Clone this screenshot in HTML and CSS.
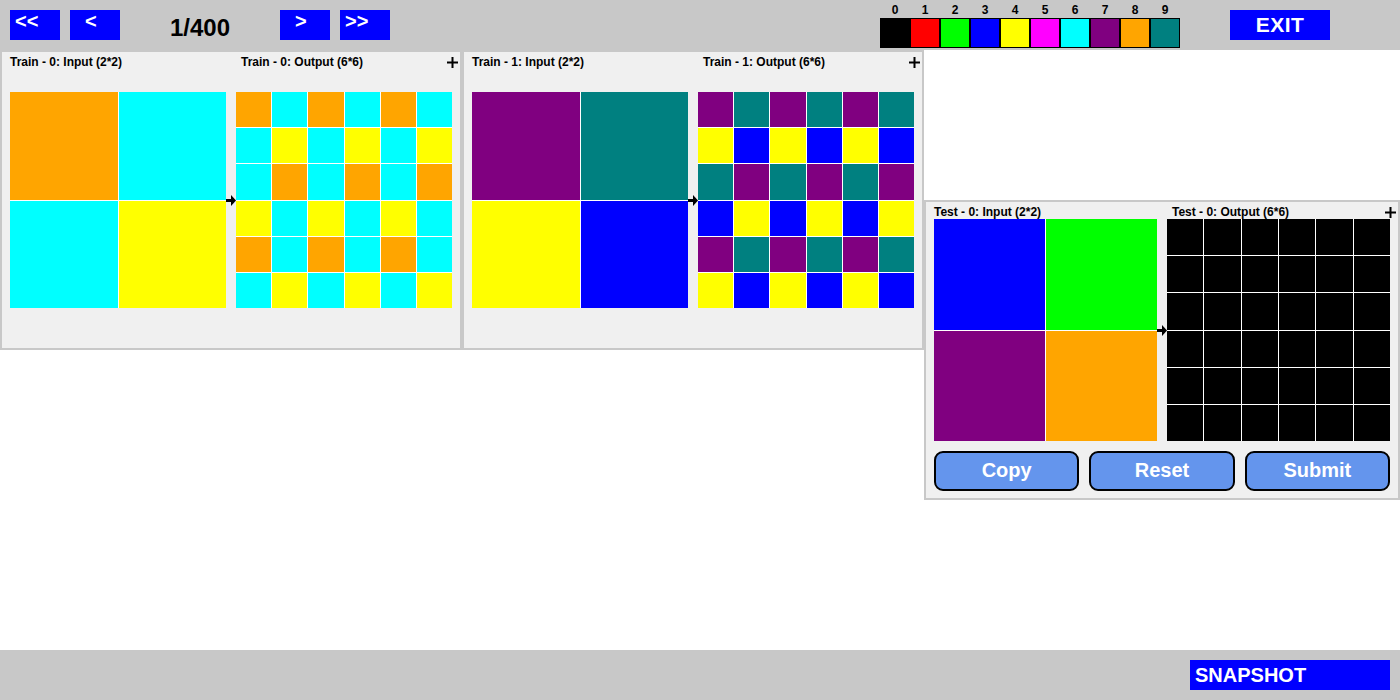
FILE: index.html
```html
<!DOCTYPE html>
<html>
<head>
<meta charset="utf-8">
<title>ARC Task</title>
<link rel="stylesheet" href="styles.css">
</head>
<body>
<div class="topbar">
  <div class="nav nav-dbl">&lt;&lt;</div>
  <div class="nav nav-sgl">&lt;</div>
  <div class="counter">1/400</div>
  <div class="nav nav-sgl">&gt;</div>
  <div class="nav nav-dbl">&gt;&gt;</div>
  <div class="palette">
    <div class="digits">
      <span>0</span><span>1</span><span>2</span><span>3</span><span>4</span><span>5</span><span>6</span><span>7</span><span>8</span><span>9</span>
    </div>
    <div class="chips">
      <span class="chip c0"></span><span class="chip c1"></span><span class="chip c2"></span><span class="chip c3"></span><span class="chip c4"></span><span class="chip c5"></span><span class="chip c6"></span><span class="chip c7"></span><span class="chip c8"></span><span class="chip c9"></span>
    </div>
  </div>
  <div class="exit">EXIT</div>
</div>

<div class="main">
  <div class="train-list">
    <section class="panel train">
      <div class="head">
        <div class="t-in">Train - 0: Input (2*2)</div>
        <div class="t-out">Train - 0: Output (6*6)</div>
        <svg class="plus" width="11" height="11" viewBox="0 0 11 11"><rect x="4.5" y="0" width="2" height="11"/><rect x="0" y="4.5" width="11" height="2"/></svg>
      </div>
      <div class="body">
        <div class="grid g2">
          <span class="c8"></span><span class="c6"></span>
          <span class="c6"></span><span class="c4"></span>
        </div>
        <div class="arrow-col"><svg width="10" height="11" viewBox="0 0 10 11"><rect x="0" y="4" width="6" height="3"/><polygon points="5,0 10,5.5 5,11"/></svg></div>
        <div class="grid g6">
          <span class="c8"></span><span class="c6"></span><span class="c8"></span><span class="c6"></span><span class="c8"></span><span class="c6"></span>
          <span class="c6"></span><span class="c4"></span><span class="c6"></span><span class="c4"></span><span class="c6"></span><span class="c4"></span>
          <span class="c6"></span><span class="c8"></span><span class="c6"></span><span class="c8"></span><span class="c6"></span><span class="c8"></span>
          <span class="c4"></span><span class="c6"></span><span class="c4"></span><span class="c6"></span><span class="c4"></span><span class="c6"></span>
          <span class="c8"></span><span class="c6"></span><span class="c8"></span><span class="c6"></span><span class="c8"></span><span class="c6"></span>
          <span class="c6"></span><span class="c4"></span><span class="c6"></span><span class="c4"></span><span class="c6"></span><span class="c4"></span>
        </div>
      </div>
    </section>

    <section class="panel train">
      <div class="head">
        <div class="t-in">Train - 1: Input (2*2)</div>
        <div class="t-out">Train - 1: Output (6*6)</div>
        <svg class="plus" width="11" height="11" viewBox="0 0 11 11"><rect x="4.5" y="0" width="2" height="11"/><rect x="0" y="4.5" width="11" height="2"/></svg>
      </div>
      <div class="body">
        <div class="grid g2">
          <span class="c7"></span><span class="c9"></span>
          <span class="c4"></span><span class="c3"></span>
        </div>
        <div class="arrow-col"><svg width="10" height="11" viewBox="0 0 10 11"><rect x="0" y="4" width="6" height="3"/><polygon points="5,0 10,5.5 5,11"/></svg></div>
        <div class="grid g6">
          <span class="c7"></span><span class="c9"></span><span class="c7"></span><span class="c9"></span><span class="c7"></span><span class="c9"></span>
          <span class="c4"></span><span class="c3"></span><span class="c4"></span><span class="c3"></span><span class="c4"></span><span class="c3"></span>
          <span class="c9"></span><span class="c7"></span><span class="c9"></span><span class="c7"></span><span class="c9"></span><span class="c7"></span>
          <span class="c3"></span><span class="c4"></span><span class="c3"></span><span class="c4"></span><span class="c3"></span><span class="c4"></span>
          <span class="c7"></span><span class="c9"></span><span class="c7"></span><span class="c9"></span><span class="c7"></span><span class="c9"></span>
          <span class="c4"></span><span class="c3"></span><span class="c4"></span><span class="c3"></span><span class="c4"></span><span class="c3"></span>
        </div>
      </div>
    </section>
  </div>

  <section class="panel test">
    <div class="head">
      <div class="t-in">Test - 0: Input (2*2)</div>
      <div class="t-out">Test - 0: Output (6*6)</div>
      <svg class="plus" width="11" height="11" viewBox="0 0 11 11"><rect x="4.5" y="0" width="2" height="11"/><rect x="0" y="4.5" width="11" height="2"/></svg>
    </div>
    <div class="body">
      <div class="grid g2">
        <span class="c3"></span><span class="c2"></span>
        <span class="c7"></span><span class="c8"></span>
      </div>
      <div class="arrow-col"><svg width="10" height="11" viewBox="0 0 10 11"><rect x="0" y="4" width="6" height="3"/><polygon points="5,0 10,5.5 5,11"/></svg></div>
      <div class="grid g6">
        <span class="c0"></span><span class="c0"></span><span class="c0"></span><span class="c0"></span><span class="c0"></span><span class="c0"></span>
        <span class="c0"></span><span class="c0"></span><span class="c0"></span><span class="c0"></span><span class="c0"></span><span class="c0"></span>
        <span class="c0"></span><span class="c0"></span><span class="c0"></span><span class="c0"></span><span class="c0"></span><span class="c0"></span>
        <span class="c0"></span><span class="c0"></span><span class="c0"></span><span class="c0"></span><span class="c0"></span><span class="c0"></span>
        <span class="c0"></span><span class="c0"></span><span class="c0"></span><span class="c0"></span><span class="c0"></span><span class="c0"></span>
        <span class="c0"></span><span class="c0"></span><span class="c0"></span><span class="c0"></span><span class="c0"></span><span class="c0"></span>
      </div>
    </div>
    <div class="actions">
      <div class="act">Copy</div>
      <div class="act">Reset</div>
      <div class="act">Submit</div>
    </div>
  </section>
</div>

<div class="bottombar">
  <div class="snapshot">SNAPSHOT</div>
</div>
</body>
</html>
```

FILE: styles.css
```css
* { box-sizing: border-box; }

html, body {
  margin: 0;
  padding: 0;
  background: #ffffff;
  font-family: "Liberation Sans", Arial, sans-serif;
  font-weight: bold;
  color: #000;
}

body {
  width: 1400px;
  height: 700px;
  display: flex;
  flex-direction: column;
  overflow: hidden;
}

/* ---------- top bar ---------- */
.topbar {
  height: 50px;
  flex: 0 0 50px;
  background: #c8c8c8;
  display: flex;
  align-items: flex-start;
  padding-left: 10px;
}

.nav {
  width: 50px;
  height: 30px;
  margin-top: 10px;
  background: #0000ff;
  color: #fff;
  font-size: 20px;
  line-height: 20px;
  padding-top: 1px;
}
.nav + .nav { margin-left: 10px; }
.nav-dbl { padding-left: 5px; }
.nav-sgl { padding-left: 15px; }

.counter {
  width: 160px;
  text-align: center;
  font-size: 24px;
  line-height: 24px;
  padding-top: 16px;
}

.palette {
  margin-left: 490px;
  width: 300px;
  display: flex;
  flex-direction: column;
}
.digits {
  display: flex;
  height: 18px;
  padding-top: 4px;
}
.digits span {
  width: 30px;
  text-align: center;
  font-size: 12px;
  line-height: 12px;
}
.chips { display: flex; }
.chip {
  width: 30px;
  height: 30px;
  border: 1px solid #000;
}

.exit {
  margin-left: 50px;
  margin-top: 10px;
  width: 100px;
  height: 30px;
  background: #0000ff;
  color: #fff;
  font-size: 21px;
  letter-spacing: 0.5px;
  line-height: 30px;
  text-align: center;
}

/* ---------- main ---------- */
.main {
  flex: 0 0 600px;
  height: 600px;
  display: flex;
  align-items: flex-start;
}

.train-list { display: flex; }

.panel {
  border: 2px solid #c8c8c8;
  background: #f0f0f0;
  padding: 0 8px;
  height: 300px;
}
.train { width: 462px; }
.test { width: 476px; align-self: center; }

.head {
  display: flex;
  align-items: center;
  height: 16px;
  padding-top: 4px;
  font-size: 12px;
  line-height: 12px;
}
.train .t-in { width: 231px; }
.test .t-in { width: 238px; }
.t-out { flex: 1; }
.plus {
  margin-right: -6px;
  margin-top: 1px;
  flex: 0 0 auto;
}

.body {
  display: flex;
  align-items: center;
}
.train .body { margin-top: 24px; }
.test .body { margin-top: 1px; }

.arrow-col {
  width: 10px;
  display: flex;
  align-items: center;
}
.arrow-col svg { display: block; }

.grid {
  display: grid;
  gap: 1px;
  background: #ffffff;
}
.train .grid { width: 216px; height: 216px; }
.test .grid { width: 223px; height: 222px; }
.g2 { grid-template-columns: repeat(2, 1fr); grid-template-rows: repeat(2, 1fr); }
.g6 { grid-template-columns: repeat(6, 1fr); grid-template-rows: repeat(6, 1fr); }
.grid span { display: block; }

.c0 { background: #000000; }
.c1 { background: #ff0000; }
.c2 { background: #00ff00; }
.c3 { background: #0000ff; }
.c4 { background: #ffff00; }
.c5 { background: #ff00ff; }
.c6 { background: #00ffff; }
.c7 { background: #800080; }
.c8 { background: #ffa500; }
.c9 { background: #008080; }

.actions {
  display: flex;
  gap: 10px;
  margin-top: 10px;
}
.act {
  flex: 1;
  height: 40px;
  border: 2px solid #000;
  border-radius: 9px;
  background: #6495ed;
  color: #fff;
  font-size: 20px;
  line-height: 34px;
  text-align: center;
}

/* ---------- bottom bar ---------- */
.bottombar {
  flex: 0 0 50px;
  height: 50px;
  background: #c8c8c8;
  display: flex;
  justify-content: flex-end;
  padding: 10px 10px 0 0;
}
.snapshot {
  width: 200px;
  height: 30px;
  background: #0000ff;
  color: #fff;
  font-size: 20px;
  line-height: 30px;
  padding-left: 5px;
}
```
